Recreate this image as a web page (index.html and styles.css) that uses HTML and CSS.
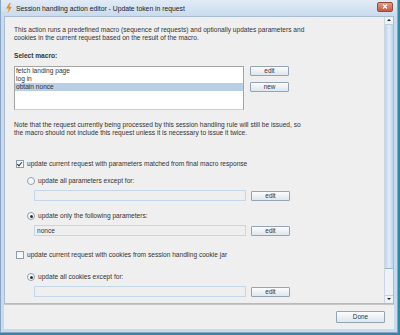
FILE: index.html
```html
<!DOCTYPE html>
<html lang="en">
<head>
    <meta charset="UTF-8">
    <title>Session handling action editor</title>
    <link rel="stylesheet" href="styles.css">
</head>
<body>
    <div class="window">
        <div class="titlebar">
            <svg class="app-icon" width="8" height="10" viewBox="0 0 8 10">
                <path d="M4.5 0 L1 5.5 L3.8 5.5 L2.5 10 L7 3.8 L4.2 3.8 L5.8 0 Z" fill="#f08a1c"/>
            </svg>
            <span class="title">Session handling action editor - Update token in request</span>
            <div class="close">
                <svg width="6" height="5" viewBox="0 0 6 5"><path d="M1 0.5 L5 4.5 M5 0.5 L1 4.5" stroke="#fff" stroke-width="1.3"/></svg>
            </div>
        </div>
        <div class="main">
            <div class="content">
                <p class="intro">This action runs a predefined macro (sequence of requests) and optionally updates parameters and<br>cookies in the current request based on the result of the macro.</p>
                <div class="label-bold">Select macro:</div>
                <div class="macro-row">
                    <div class="list">
                        <div class="item">fetch landing page</div>
                        <div class="item">log in</div>
                        <div class="item selected">obtain nonce</div>
                    </div>
                    <div class="side-buttons">
                        <button class="btn">edit</button>
                        <button class="btn">new</button>
                    </div>
                </div>
                <p class="note">Note that the request currently being processed by this session handling rule will still be issued, so<br>the macro should not include this request unless it is necessary to issue it twice.</p>

                <div class="check-row"><span class="checkbox checked"></span>update current request with parameters matched from final macro response</div>
                <div class="radio-row first"><span class="radio"></span>update all parameters except for:</div>
                <div class="field-row"><div class="field"></div><button class="btn">edit</button></div>
                <div class="radio-row"><span class="radio on"></span>update only the following parameters:</div>
                <div class="field-row"><div class="field">nonce</div><button class="btn">edit</button></div>

                <div class="check-row cookies"><span class="checkbox"></span>update current request with cookies from session handling cookie jar</div>
                <div class="radio-row after-cookies"><span class="radio on"></span>update all cookies except for:</div>
                <div class="field-row"><div class="field"></div><button class="btn">edit</button></div>
                <div class="radio-row last"><span class="radio"></span>update only the following cookies:</div>
            </div>
            <div class="scrollbar">
                <div class="arrow up"></div>
                <div class="track"><div class="thumb"></div></div>
                <div class="arrow down"></div>
            </div>
        </div>
        <div class="footer">
            <button class="btn done">Done</button>
        </div>
    </div>
</body>
</html>
```

FILE: styles.css
```css
body {
    margin: 0;
    background-color: #2b8aa3;
    font-family: 'Liberation Sans', Arial, sans-serif;
    font-size: 6.6px;
    color: #333;
}
.window {
    width: 398px;
    height: 333px;
    background-color: #c8daee;
    display: flex;
    flex-direction: column;
    box-sizing: border-box;
    padding: 0 3px 3px 3px;
    border: 1px solid #8aa5c4;
    border-top: none;
}
.titlebar {
    height: 16px;
    display: flex;
    align-items: center;
    background: linear-gradient(#e1ebf6, #c9dbee);
    margin: 0 -3px;
    padding: 0 4px 0 4px;
}
.app-icon {
    margin-right: 3px;
}
.title {
    flex: 1;
    font-size: 6.8px;
    color: #222;
}
.close {
    width: 14px;
    height: 8px;
    background: linear-gradient(#e39a88, #c75a44);
    border: 1px solid #9a4a3a;
    border-radius: 2px;
    display: flex;
    align-items: center;
    justify-content: center;
    margin: -3px 0 0 0;
}
.close svg {
    display: block;
}
.main {
    flex: 1;
    display: flex;
    background-color: #efefef;
    border: 1px solid #a9bcd3;
    overflow: hidden;
}
.content {
    flex: 1;
    padding: 9px 0 0 9px;
    overflow: hidden;
    height: 290px;
}
p {
    margin: 0;
    line-height: 8px;
    white-space: nowrap;
}
.label-bold {
    font-weight: bold;
    margin-top: 10px;
    line-height: 8px;
}
.macro-row {
    display: flex;
    gap: 6px;
    margin-top: 6px;
}
.list {
    width: 228px;
    height: 42px;
    background-color: #fff;
    border: 1px solid #a4a4a4;
    border-bottom-color: #d0d0d0;
}
.item {
    height: 8px;
    line-height: 8px;
    padding-left: 1px;
}
.item.selected {
    background-color: #b8cfe6;
}
.side-buttons {
    display: flex;
    flex-direction: column;
    gap: 6px;
}
.btn {
    width: 39px;
    height: 10px;
    padding: 0;
    font-family: inherit;
    font-size: 6.4px;
    color: #333;
    line-height: 8px;
    background: linear-gradient(#fbfcfd, #dfe6ee);
    border: 1px solid #95a4b5;
    border-radius: 1px;
}
.note {
    margin-top: 11px;
}
.check-row,
.radio-row {
    display: flex;
    align-items: center;
    height: 8px;
    line-height: 8px;
}
.check-row {
    margin-top: 23px;
    padding-left: 2px;
}
.check-row.cookies {
    margin-top: 15px;
}
.radio-row {
    padding-left: 13px;
    margin-top: 11px;
}
.radio-row.first {
    margin-top: 9px;
}
.radio-row.after-cookies {
    margin-top: 14px;
}
.radio-row.last {
    margin-top: 9px;
}
.checkbox {
    width: 6px;
    height: 6px;
    border: 1px solid #8d9db0;
    background: linear-gradient(#f0f3f7, #fff);
    margin-right: 3px;
    position: relative;
}
.checkbox.checked::after {
    content: "";
    position: absolute;
    left: 1px;
    top: 0;
    width: 2px;
    height: 4px;
    border: solid #333;
    border-width: 0 1px 1px 0;
    transform: rotate(40deg);
}
.radio {
    width: 6px;
    height: 6px;
    border: 1px solid #8d9db0;
    border-radius: 50%;
    background: #f8f9fb;
    margin-right: 3px;
    position: relative;
}
.radio.on::after {
    content: "";
    position: absolute;
    left: 1.5px;
    top: 1.5px;
    width: 3px;
    height: 3px;
    border-radius: 50%;
    background: #333;
}
.field-row {
    display: flex;
    align-items: center;
    gap: 5px;
    margin-top: 5px;
    padding-left: 20px;
}
.field {
    width: 208px;
    height: 9px;
    line-height: 9px;
    padding-left: 2px;
    border: 1px solid #c3d6ea;
    background-color: #efefef;
}
.scrollbar {
    width: 8px;
    display: flex;
    flex-direction: column;
    border-left: 1px solid #c9d6e4;
    background-color: #eef2f7;
}
.arrow {
    height: 7px;
    position: relative;
}
.arrow::after {
    content: "";
    position: absolute;
    left: 2px;
    top: 2px;
    border-left: 2px solid transparent;
    border-right: 2px solid transparent;
}
.arrow.up::after {
    border-bottom: 2px solid #222;
}
.arrow.down::after {
    border-top: 2px solid #222;
}
.track {
    flex: 1;
    display: flex;
    flex-direction: column;
    border: 1px solid #c0cfe0;
    border-left: none;
    border-right: none;
}
.thumb {
    height: 243px;
    background: linear-gradient(90deg, #bed3ea, #e2ecf7 50%, #bed3ea);
    border-bottom: 1px solid #9ab4d2;
}
.footer {
    height: 24px;
    background-color: #efefef;
    border-top: 1px solid #c6c6c6;
    display: flex;
    justify-content: flex-end;
    align-items: center;
    padding-right: 9px;
}
.btn.done {
    width: 49px;
    height: 12px;
}
```
